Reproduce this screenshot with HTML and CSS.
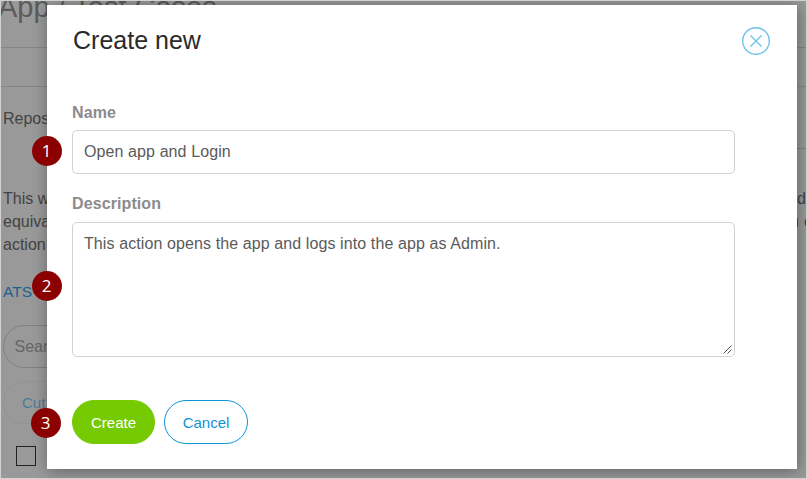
FILE: index.html
```html
<!DOCTYPE html>
<html lang="en">
<head>
<meta charset="utf-8">
<title>Create new</title>
<link rel="stylesheet" href="styles.css">
</head>
<body>
<div class="frame">
  <main class="page">
    <h1 class="page-title">App / Test Cases</h1>
    <div class="toolbar"></div>
    <div class="tabs"><span class="tab">Repos</span></div>
    <div class="intro">
      <p>This w<span class="line-end">d</span></p>
      <p>equiva<span class="line-end"><i></i>o</span></p>
      <p>action</p>
    </div>
    <a class="link">ATS</a>
    <div class="search">Sear</div>
    <div class="pill">Cut</div>
    <div class="checkbox"></div>
  </main>
  <section class="modal">
    <header class="modal-head">
      <h2>Create new</h2>
      <svg class="close" viewBox="0 0 28 28" width="28" height="28"><circle cx="14" cy="14" r="13.3"/><path d="M8.5 8.5l11 11M19.5 8.5l-11 11"/></svg>
    </header>
    <label class="label">Name</label>
    <div class="field">Open app and Login</div>
    <label class="label second">Description</label>
    <div class="field area">This action opens the app and logs into the app as Admin.
      <svg class="grip" viewBox="0 0 9 9" width="9" height="9"><path d="M.5 8.5l8-8M4.5 8.5l4-4"/></svg>
    </div>
    <div class="actions">
      <button class="btn create">Create</button>
      <button class="btn cancel">Cancel</button>
    </div>
  </section>
  <span class="badge one">1</span>
  <span class="badge two">2</span>
  <span class="badge three">3</span>
</div>
</body>
</html>
```
FILE: styles.css
```css
* { box-sizing: border-box; }
body { margin: 0; font: 16px/23px "Liberation Sans", Arial, sans-serif; color: #5a5a5a; }
h1, h2, p { margin: 0; font-weight: 400; }
.frame { position: relative; width: 807px; height: 479px; border: 1px solid #d0d3d2; background: #999; overflow: hidden; }
.page { display: flex; flex-direction: column; align-items: flex-start; color: #434343; }
.page-title { width: 100%; height: 47px; font-size: 29px; line-height: 13px; text-indent: -3px; color: #5b5b5b; border-bottom: 1px solid #858585; white-space: nowrap; }
.toolbar { width: 100%; height: 39px; border-bottom: 1px solid #858585; }
.tabs { display: flex; width: 100%; height: 62px; }
.tab { width: 120px; padding: 20px 0 0 2px; }
.tabs::after { content: ""; flex: 1; border-bottom: 1px solid #808080; }
.intro { width: 100%; margin-top: 38px; padding-left: 2px; }
.intro p { display: flex; justify-content: space-between; }
.line-end { width: 9px; display: flex; gap: 6px; }
.intro p:first-child .line-end { justify-content: flex-end; }
.line-end i { flex: none; width: 1px; height: 9px; margin-top: 8px; background: #365a78; }
.link { margin: 24px 0 0 2px; font-size: 15.5px; color: #1c628e; }
.search { width: 200px; height: 43px; margin: 22px 0 0 2px; padding: 9px 10.5px; border: 1px solid #808080; border-radius: 22px; color: #666; }
.pill { width: 120px; height: 43px; margin: 13px 0 0 2px; padding: 9px 18px; border: 1px solid #939393; border-radius: 22px; font-size: 15px; color: #4c7c98; }
.checkbox { width: 20px; height: 20px; margin: 22px 0 0 15px; border: 1px solid #222; }
.modal { position: absolute; left: 46px; top: 4px; width: 750px; height: 464px; padding: 20px 27px 0 25px; background: #fff; box-shadow: 1px 2px 14px rgba(0,0,0,.36); }
.modal-head { display: flex; justify-content: space-between; height: 76px; }
.modal-head h2 { margin-top: -1px; padding-left: 1px; font-size: 25px; line-height: 32px; color: #2a2a2a; }
.close { margin-top: 2px; fill: none; stroke: #70c2ee; stroke-width: 1.4; }
.label { display: block; height: 29px; font-weight: 700; letter-spacing: .1px; color: #8b8b8b; }
.second { margin-top: 18px; }
.field { width: 663px; height: 44px; padding: 9px 11px; border: 1px solid #d2d2d2; border-radius: 5px; letter-spacing: .1px; }
.area { position: relative; height: 135px; margin-top: 1px; }
.grip { position: absolute; right: 2px; bottom: 2px; fill: none; stroke: #555; stroke-width: 1; }
.actions { display: flex; gap: 9px; margin-top: 43px; }
.btn { height: 44px; padding: 1px 0 0; border: 1px solid #0f93d8; border-radius: 22px; background: #fff; color: #0f93d8; font: 15px "Liberation Sans", Arial, sans-serif; }
.create { width: 83px; border-color: #76ca02; background: #76ca02; color: #fff; }
.cancel { width: 84px; }
.badge { position: absolute; width: 30px; height: 30px; border-radius: 50%; background: #8b0000; color: #fff; font: 17px/29px "Open Sans", sans-serif; text-align: center; }
.one { left: 30.5px; top: 134.5px; }
.two { left: 30.5px; top: 269.5px; }
.three { left: 29.5px; top: 406.5px; }
```
